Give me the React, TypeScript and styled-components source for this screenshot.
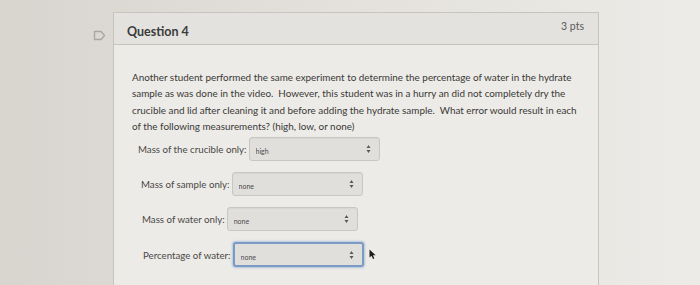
import styled, { createGlobalStyle } from 'styled-components';

const GlobalStyle = createGlobalStyle`
  html, body {
    margin: 0;
    padding: 0;
  }
  body {
    width: 700px;
    height: 285px;
    overflow: hidden;
    background: linear-gradient(90deg, #d8d4ce 0%, #e3e0db 45%, #ecebe7 100%);
    font-family: Lato, "Open Sans", sans-serif;
  }
`;

const Page = styled.div`
  display: flex;
  align-items: flex-start;
  padding: 12px 0 0 93px;
`;

const Gutter = styled.div`
  width: 20px;
  padding-top: 13px;
`;

const Card = styled.section`
  width: 484px;
  height: 290px;
  border: 1px solid #c7c4be;
  background: #ecebe7;
`;

const Header = styled.header`
  height: 31px;
  display: flex;
  align-items: center;
  justify-content: space-between;
  padding: 0 14px 0 13px;
  background: #e3e2de;
  border-bottom: 1px solid #c7c4be;
`;

const Title = styled.h2`
  margin: 5px 0 0;
  font-size: 12.5px;
  font-weight: 700;
  color: #3b3b3b;
`;

const Points = styled.span`
  margin-top: -6px;
  font-size: 10.5px;
  color: #5a5a5a;
`;

const Body = styled.div`
  padding: 24px 10px 0 18px;
`;

const Prompt = styled.p`
  margin: 0 0 3px;
  font-size: 9.9px;
  line-height: 16.3px;
  color: #3a3836;
  white-space: nowrap;
`;

const Answers = styled.div`
  display: flex;
  flex-direction: column;
  gap: 11px;
`;

const Row = styled.div<{ $indent: number }>`
  display: flex;
  align-items: center;
  padding-left: ${({ $indent }) => $indent}px;
`;

const Label = styled.label`
  font-size: 9.7px;
  color: #4a4846;
  margin-right: 2px;
  white-space: nowrap;
`;

const Field = styled.div<{ $focused?: boolean }>`
  position: relative;
  width: ${({ $focused }) => ($focused ? 127 : 129)}px;
  height: ${({ $focused }) => ($focused ? 21 : 22)}px;
  border: ${({ $focused }) => ($focused ? '2px solid #7c9bc4' : '1px solid #c9c7c2')};
  border-radius: 3px;
  background: #e1dfdb;
  box-shadow: ${({ $focused }) =>
    $focused ? '0 0 2px 1px rgba(140, 170, 210, 0.6)' : 'inset 0 1px 1px rgba(0,0,0,0.04)'};
`;

const Select = styled.select`
  appearance: none;
  width: 100%;
  height: 100%;
  border: 0;
  background: transparent;
  font-family: Lato, sans-serif;
  font-size: 7px;
  color: #4a4a4a;
  padding: 0 0 7px 6px;
  outline: none;
`;

const Arrows = styled.svg`
  position: absolute;
  right: 8px;
  top: 50%;
  transform: translateY(-50%);
  pointer-events: none;
`;

const Pointer = styled.svg`
  margin: 0 0 0 5px;
`;

const rows = [
  { label: 'Mass of the crucible only:', value: 'high', indent: 6 },
  { label: 'Mass of sample only:', value: 'none', indent: 9 },
  { label: 'Mass of water only:', value: 'none', indent: 10 },
  { label: 'Percentage of water:', value: 'none', indent: 11, focused: true },
];

const App = () => {
  return (
    <>
      <GlobalStyle />
      <Page>
        <Gutter>
          <svg width="13" height="11" viewBox="0 0 13 11">
            <path
              d="M1.5 1.5 H8 L11.5 5.5 L8 9.5 H1.5 Z"
              fill="none"
              stroke="#a9a7a3"
              strokeWidth="1.4"
              strokeLinejoin="round"
            />
          </svg>
        </Gutter>
        <Card>
          <Header>
            <Title>Question 4</Title>
            <Points>3 pts</Points>
          </Header>
          <Body>
            <Prompt>
              Another student performed the same experiment to determine the percentage of water in the hydrate
              <br />
              sample as was done in the video.&nbsp; However, this student was in a hurry an did not completely dry the
              <br />
              crucible and lid after cleaning it and before adding the hydrate sample.&nbsp; What error would result in each
              <br />
              of the following measurements? (high, low, or none)
            </Prompt>
            <Answers>
              {rows.map((row) => (
                <Row key={row.label} $indent={row.indent}>
                  <Label>{row.label}</Label>
                  <Field $focused={row.focused}>
                    <Select defaultValue={row.value}>
                      <option value="high">high</option>
                      <option value="low">low</option>
                      <option value="none">none</option>
                    </Select>
                    <Arrows width="5" height="9" viewBox="0 0 5 9">
                      <path d="M2.5 0.5 L4.5 3.5 H0.5 Z M2.5 8.5 L4.5 5.5 H0.5 Z" fill="#5a5a5a" />
                    </Arrows>
                  </Field>
                  {row.focused && (
                    <Pointer width="8" height="11" viewBox="0 0 8 11">
                      <path d="M0.5 0.5 L0.5 8.5 L2.5 6.8 L4 10 L5.3 9.4 L3.9 6.3 L6.6 6.3 Z" fill="#1c1c1c" />
                    </Pointer>
                  )}
                </Row>
              ))}
            </Answers>
          </Body>
        </Card>
      </Page>
    </>
  );
};

export default App;
